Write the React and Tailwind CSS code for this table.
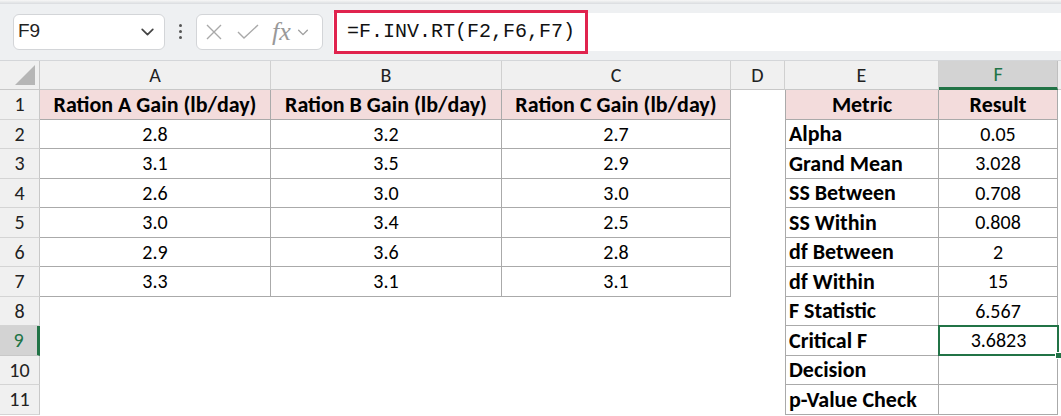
import React from "react";

const COLS = [40, 231, 231, 229, 54, 154, 119];
const FONT = { fontFamily: "Carlito, Lato, 'Noto Sans', sans-serif" };

const data = [
  ["2.8", "3.2", "2.7"],
  ["3.1", "3.5", "2.9"],
  ["2.6", "3.0", "3.0"],
  ["3.0", "3.4", "2.5"],
  ["2.9", "3.6", "2.8"],
  ["3.3", "3.1", "3.1"],
];

const metrics = [
  ["Metric", "Result"],
  ["Alpha", "0.05"],
  ["Grand Mean", "3.028"],
  ["SS Between", "0.708"],
  ["SS Within", "0.808"],
  ["df Between", "2"],
  ["df Within", "15"],
  ["F Statistic", "6.567"],
  ["Critical F", "3.6823"],
  ["Decision", ""],
  ["p-Value Check", ""],
];

function Chevron({ className }) {
  return (
    <svg className={className} viewBox="0 0 16 16" fill="none" stroke="currentColor" strokeWidth="1.6" strokeLinecap="round" strokeLinejoin="round">
      <path d="M3 6l5 5 5-5" />
    </svg>
  );
}

function Toolbar() {
  return (
    <div className="h-[61px] bg-[#eef0f2] relative">
      <div className="absolute top-0 left-0 right-0 h-[4px] bg-gradient-to-b from-[#f7f7f7] to-[#d9dcdf]" />
      <div className="flex items-center h-full pt-[2px]">
        <div className="ml-[13px] w-[152px] h-[36px] bg-white border border-[#d3d5d8] rounded-[6px] flex items-center justify-between pl-[4px] pr-[8px]">
          <span className="text-[19px] text-[#222]" style={{ fontFamily: "'Liberation Sans', Arial, sans-serif" }}>F9</span>
          <Chevron className="w-[17px] h-[17px] text-[#444]" />
        </div>
        <div className="w-[31px] flex flex-col items-center gap-[3px]">
          <div className="w-[3px] h-[3px] rounded-full bg-[#555]" />
          <div className="w-[3px] h-[3px] rounded-full bg-[#555]" />
          <div className="w-[3px] h-[3px] rounded-full bg-[#555]" />
        </div>
        <div className="w-[127px] h-[36px] bg-white border border-[#d3d5d8] rounded-[6px] flex items-center pl-[8px] pr-[4px] text-[#a9a9a9]">
          <svg className="w-[18px] h-[18px]" viewBox="0 0 18 18" fill="none" stroke="currentColor" strokeWidth="1.4">
            <path d="M2 2l14 14M16 2L2 16" />
          </svg>
          <svg className="ml-[14px] w-[22px] h-[18px]" viewBox="0 0 22 18" fill="none" stroke="currentColor" strokeWidth="1.4">
            <path d="M1 9l6 6L21 2" />
          </svg>
          <span className="ml-[13px] text-[26px] italic leading-none text-[#999]" style={{ fontFamily: "'Liberation Serif', 'DejaVu Serif', serif" }}>fx</span>
          <Chevron className="ml-[5px] w-[14px] h-[14px] text-[#a0a0a0]" />
        </div>
        <div className="ml-[10px] flex-1 h-[38px] bg-white relative flex items-center">
          <div className="absolute left-[1px] top-[-3px] w-[254px] h-[44px] border-[3px] border-[#e0234e]" />
          <span className="ml-[14px] text-[20px] text-[#111]" style={{ fontFamily: "'Liberation Mono', 'DejaVu Sans Mono', monospace" }}>=F.INV.RT(F2,F6,F7)</span>
        </div>
      </div>
      <div className="absolute left-0 right-0 bottom-0 h-[1px] bg-[#d4d6d9]" />
    </div>
  );
}

function App() {
  const gridCols = COLS.map((c) => c + "px").join(" ") + " 1fr";
  const headers = ["", "A", "B", "C", "D", "E", "F"];
  const cells = [];

  headers.forEach((h, i) => {
    if (i === 0) {
      cells.push(
        <div key="corner" className="bg-[#f0f0f0] border-r border-b border-[#c8c8c8] relative">
          <div className="absolute right-[4px] bottom-[4px] w-0 h-0 border-l-[20px] border-l-transparent border-b-[20px] border-b-[#b6b6b6]" />
        </div>
      );
    } else if (h === "F") {
      cells.push(
        <div key={"h" + i} className="bg-[#d3d3d3] border-r border-[#bfbfbf] border-b-[3px] border-b-[#217346] flex items-center justify-center text-[20px] text-[#217346]">
          {h}
        </div>
      );
    } else {
      cells.push(
        <div key={"h" + i} className="bg-[#f0f0f0] border-r border-b border-[#d0d0d0] border-b-[#c8c8c8] flex items-center justify-center text-[20px] text-[#222]">
          {h}
        </div>
      );
    }
  });
  cells.push(<div key="hend" className="bg-[#f0f0f0] border-b border-[#c8c8c8]" />);

  for (let r = 1; r <= 11; r++) {
    const sel = r === 9;
    cells.push(
      <div
        key={"r" + r}
        className={
          sel
            ? "bg-[#d3d3d3] border-b border-[#c8c8c8] border-r-[3px] border-r-[#217346] flex items-center justify-center text-[20px] text-[#217346]"
            : "bg-[#f0f0f0] border-b border-r border-[#d4d4d4] border-r-[#c8c8c8] flex items-center justify-center text-[20px] text-[#222]"
        }
      >
        {r}
      </div>
    );
    for (let c = 0; c < 3; c++) {
      if (r === 1) {
        cells.push(
          <div key={r + "-" + c} className="bg-[#f3dcdc] border-r border-b border-[#aaaaaa] flex items-center justify-center font-bold text-[22px] text-black whitespace-nowrap">
            {["Ration A Gain (lb/day)", "Ration B Gain (lb/day)", "Ration C Gain (lb/day)"][c]}
          </div>
        );
      } else if (r <= 7) {
        cells.push(
          <div key={r + "-" + c} className="bg-white border-r border-b border-[#aaaaaa] flex items-center justify-center text-[20px] text-black">
            {data[r - 2][c]}
          </div>
        );
      } else {
        cells.push(<div key={r + "-" + c} className="bg-white" />);
      }
    }
    cells.push(<div key={r + "-d"} className="bg-white" />);
    const m = metrics[r - 1];
    cells.push(
      <div
        key={r + "-e"}
        className={
          "border-l border-r border-b border-[#aaaaaa] flex items-center font-bold text-[22px] text-black whitespace-nowrap " +
          (r === 1 ? "bg-[#f3dcdc] justify-center" : "bg-white pl-[3px]")
        }
      >
        {m[0]}
      </div>
    );
    if (sel) {
      cells.push(
        <div key={r + "-f"} className="bg-white border-b border-[#aaaaaa] relative flex items-center justify-center text-[20px] text-black">
          <div className="absolute left-[-1px] top-[-1px] right-[-1px] bottom-[-1px] border-[2px] border-[#217346]" />
          <div className="absolute right-[-4px] bottom-[-4px] w-[7px] h-[7px] bg-[#217346] border border-white" />
          {m[1]}
        </div>
      );
    } else {
      cells.push(
        <div
          key={r + "-f"}
          className={
            "border-r border-b border-[#aaaaaa] flex items-center justify-center text-black " +
            (r === 1 ? "bg-[#f3dcdc] font-bold text-[22px]" : "bg-white text-[20px]")
          }
        >
          {m[1]}
        </div>
      );
    }
    cells.push(<div key={r + "-end"} className="bg-white" />);
  }

  return (
    <div className="w-[1061px] h-[416px] overflow-hidden bg-white" style={FONT}>
      <Toolbar />
      <div
        className="grid"
        style={{ gridTemplateColumns: gridCols, gridTemplateRows: "29px repeat(11, 29.5px)" }}
      >
        {cells}
      </div>
    </div>
  );
}

export default App;
